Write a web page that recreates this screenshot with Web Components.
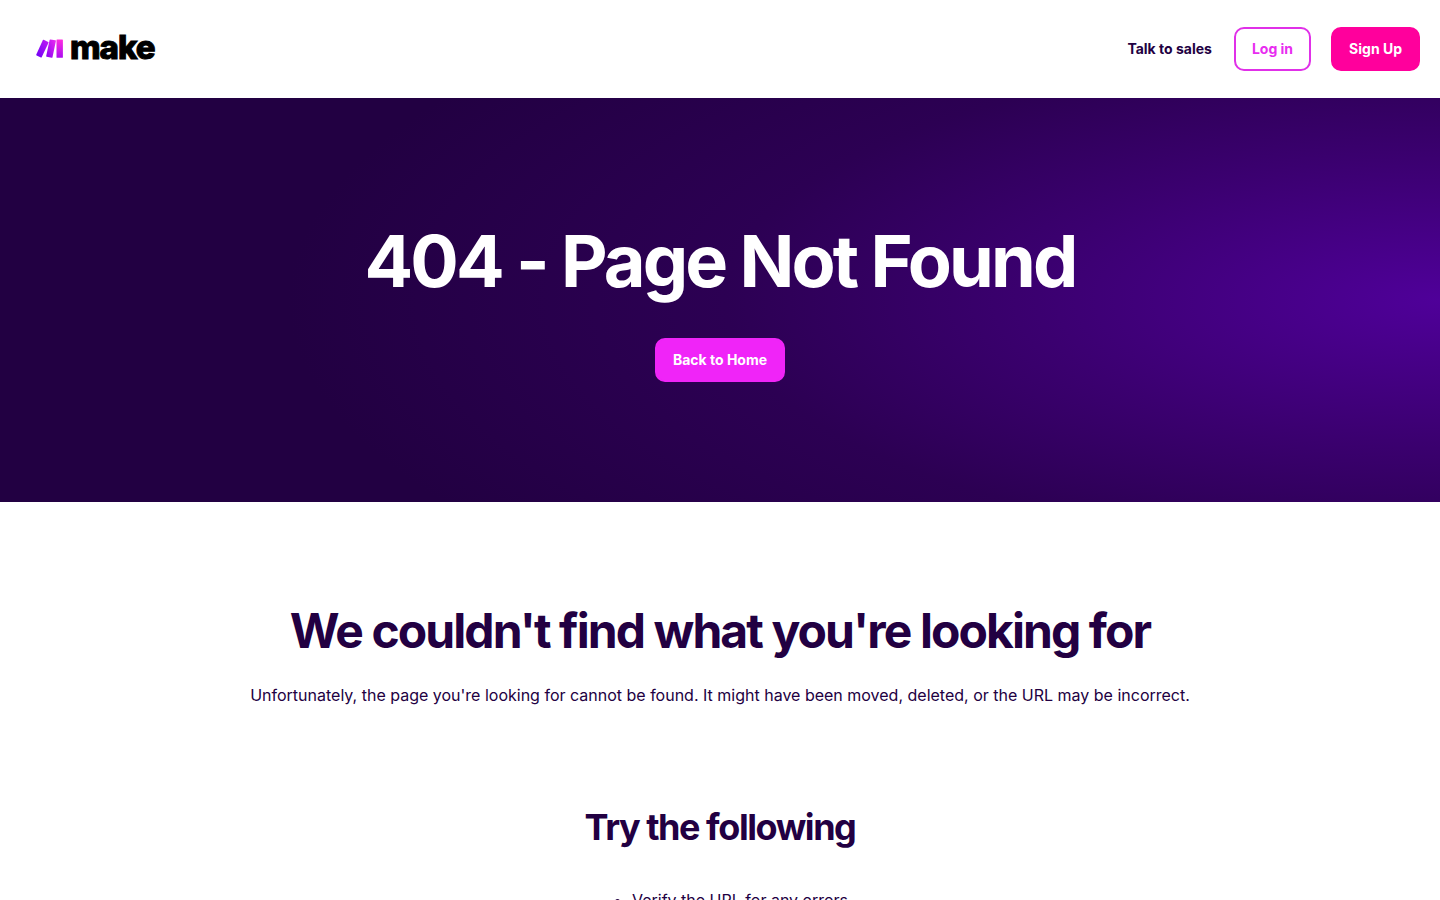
<!DOCTYPE html>
<html lang="en">
<head>
<meta charset="utf-8">
<meta name="viewport" content="width=device-width, initial-scale=1">
<title>404 - Page Not Found | Make</title>
<style>
  body {
    margin: 0;
    background: #fff;
    color: #220042;
    font-family: Inter, "Liberation Sans", sans-serif;
    font-size: 16px;
    line-height: 24px;
  }
</style>
</head>
<body>
<site-header>
  <make-logo slot="logo"></make-logo>
  <action-link href="#sales" variant="text">Talk to sales</action-link>
  <action-link href="#login" variant="outline">Log in</action-link>
  <action-link href="#signup" variant="solid">Sign Up</action-link>
</site-header>
<main>
  <hero-banner>
    <span slot="title">404 - Page Not Found</span>
    <action-link href="#home" variant="accent">Back to Home</action-link>
  </hero-banner>
  <message-section>
    <span slot="title">We couldn't find what you're looking for</span>
    Unfortunately, the page you're looking for cannot be found. It might have been moved, deleted, or the URL may be incorrect.
  </message-section>
  <tip-list>
    <span slot="title">Try the following</span>
    <span slot="tip">Verify the URL for any errors</span>
  </tip-list>
</main>
<script>
  const define = (name, html, setup) => {
    const template = document.createElement('template');
    template.innerHTML = html;
    customElements.define(name, class extends HTMLElement {
      constructor() {
        super();
        this.attachShadow({ mode: 'open' }).append(template.content.cloneNode(true));
      }
      connectedCallback() { if (setup) setup(this); }
    });
  };

  define('make-logo', `
    <style>
      :host { display: block; }
      a { display: flex; align-items: center; gap: 6px; padding-bottom: 4px; color: #000; text-decoration: none; }
      svg { display: block; padding-top: 4px; }
      span { font-size: 33px; line-height: 40px; font-weight: 800; letter-spacing: -1px; -webkit-text-stroke: 1px #000; }
    </style>
    <a href="#home">
      <svg width="28" height="20" viewBox="0 0 28 20" aria-hidden="true">
        <defs>
          <linearGradient id="a" x1="0" y1="1" x2="1" y2="0"><stop stop-color="#6d00f5"/><stop offset="1" stop-color="#c21bf5"/></linearGradient>
          <linearGradient id="b" x1="0" y1="1" x2="1" y2="0"><stop stop-color="#8500f2"/><stop offset="1" stop-color="#f02cf2"/></linearGradient>
          <linearGradient id="c" x1="0" y1="1" x2="0" y2="0"><stop stop-color="#ab0df0"/><stop offset="1" stop-color="#ff2ce0"/></linearGradient>
        </defs>
        <path fill="url(#a)" d="M7.700.7 12.200 2.900Q12.700 3.200 12.500 3.700L5.700 18.200Q5.400 18.700 4.900 18.500L.6 16.400Q.1 16.100.3 15.600L6.900 1Q7.200.5 7.700.7Z"/>
        <path fill="url(#b)" d="M14.400.4 19.400 1.300Q20 1.400 19.900 2L16.500 18.200Q16.300 18.800 15.700 18.700L10.700 17.800Q10.100 17.600 10.200 17.100L13.600.9Q13.800.3 14.400.4Z"/>
        <rect fill="url(#c)" x="20.500" y=".4" width="6.400" height="18.400" rx=".6"/>
      </svg>
      <span>make</span>
    </a>`);

  define('action-link', `
    <style>
      :host { display: inline-block; }
      a {
        display: block; box-sizing: border-box; padding: 10px 16px;
        border: 2px solid transparent; border-radius: 10px;
        font-size: 14px; line-height: 20px; font-weight: 700;
        color: #fff; text-decoration: none; white-space: nowrap;
      }
      :host([variant="text"]) a { padding: 10px 0; color: #220042; }
      :host([variant="outline"]) a { border-color: #e030e8; color: #e82cf0; }
      :host([variant="solid"]) a { background: #ff009c; border-color: #ff009c; }
      :host([variant="accent"]) a { background: #f024f8; border-color: #f024f8; }
    </style>
    <a><slot></slot></a>`,
    host => host.shadowRoot.querySelector('a').setAttribute('href', host.getAttribute('href')));

  define('site-header', `
    <style>
      :host { display: block; }
      header {
        display: flex; align-items: center; justify-content: space-between;
        box-sizing: border-box; min-height: 98px; padding: 0 20px 0 36px;
      }
      nav { display: flex; align-items: center; gap: 20px; }
    </style>
    <header><slot name="logo"></slot><nav aria-label="Account"><slot></slot></nav></header>`);

  define('hero-banner', `
    <style>
      :host { display: block; }
      section {
        display: flex; flex-direction: column; align-items: center; gap: 34px;
        padding: 120px 20px; text-align: center; color: #fff;
        background: radial-gradient(80% 100% at 100% 50%, #4f0099, #3b0070 35%, #2c0053 62%, #220042);
      }
      h1 { margin: 0; font-size: 72px; line-height: 86px; font-weight: 700; letter-spacing: -0.04em; }
    </style>
    <section><h1><slot name="title"></slot></h1><slot></slot></section>`);

  define('message-section', `
    <style>
      :host { display: block; }
      section { padding: 100px 20px 0; text-align: center; }
      h2 { margin: 0 0 24px; font-size: 48px; line-height: 58px; font-weight: 700; letter-spacing: -0.04em; }
      p { margin: 0; line-height: 22px; }
    </style>
    <section><h2><slot name="title"></slot></h2><p><slot></slot></p></section>`);

  define('tip-list', `
    <style>
      :host { display: block; }
      section { display: flex; flex-direction: column; align-items: center; gap: 38px; padding: 98px 20px; }
      h3 { margin: 0; font-size: 36px; line-height: 46px; font-weight: 700; letter-spacing: -0.04em; }
      ul { margin: 0; padding: 0 0 0 40px; }
    </style>
    <section><h3><slot name="title"></slot></h3><ul><li><slot name="tip"></slot></li></ul></section>`);
</script>
</body>
</html>
